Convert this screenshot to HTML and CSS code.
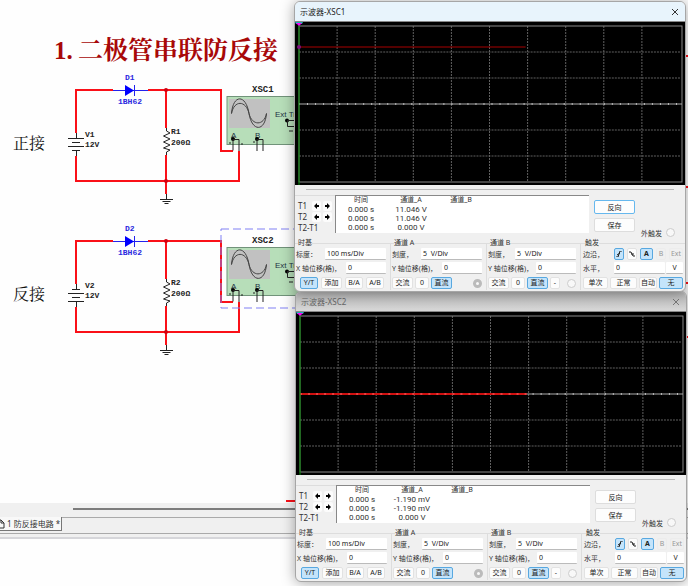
FILE: index.html
```
<!doctype html>
<html lang="zh-CN">

<head>
    <meta charset="utf-8">
    <title>防反接电路</title>
    <link rel="stylesheet" href="styles.css">
</head>
<body>
<main class="desktop">
    <div class="sheet">
        <svg class="schematic" width="688" height="503" viewBox="0 0 688 503">
            <defs>
                <!-- wires and parts shared by both circuits -->
                <g id="circuit">
                    <path class="wire" d="M113 90H76V133M76 156V181H239V151M148 90H221V151H233M166 90V128M166 155V194"/>
                    <circle class="node" cx="166" cy="90" r="2"/>
                    <circle class="node" cx="166" cy="181" r="2"/>
                    <path class="diode" d="M113 90.500H148M134.500 85V96"/>
                    <path class="diode-fill" d="M125 85L134 90.500L125 96Z"/>
                    <path class="part" d="M166.500 128V131L170 133L163.500 136L170 139L163.500 142L170 145L163.500 148L170 150L166.500 152V155"/>
                    <path class="part" d="M166.500 194V199M160 199.500H173M162.500 201.500H170.500M164.500 203.500H168.500"/>
                </g>
                <g id="scope">
                    <rect class="scope-box" x="227" y="96.500" width="72" height="48"/>
                    <rect class="scope-screen" x="229" y="99" width="41" height="29"/>
                    <path class="wave" d="M231.500 113.500C233 94 246 94 249 113.500C252 132 265 132 266.500 113.500"/>
                    <path class="wave" d="M231.500 113.500C234 100 246 100 249 113.500C252 126 264 126 266.500 113.500"/>
                    <text class="scope-text" x="275" y="117">Ext Trig</text>
                    <text class="scope-text" x="231" y="138">A</text>
                    <text class="scope-text" x="255" y="138">B</text>
                    <circle cx="233" cy="139" r="2"/>
                    <circle cx="257" cy="139" r="2"/>
                    <circle cx="287" cy="120.500" r="2"/>
                    <path class="part" d="M233 139V150.500M233 139.500H239V151M257 139V151M257 139.500H263V151M287 120.500H294M287.500 121V126.500H294M289 131H293M229 143H231M241 144H243M253 142H255"/>
                </g>
            </defs>

            <text class="heading" x="54" y="59">1.</text>
            <text class="heading" x="78" y="59">二极管串联防反接</text>

            <use href="#circuit"/>
            <use href="#scope"/>
            <path class="part" d="M76.500 133V138M68 138.500H84M72 142.500H80M68 146.500H84M72 150.500H80M76.500 151V156"/>
            <text class="side" x="13" y="149">正接</text>
            <text class="label blue" x="125" y="80">D1</text>
            <text class="label blue" x="118" y="104">1BH62</text>
            <text class="label" x="85" y="137">V1</text>
            <text class="label" x="85" y="147">12V</text>
            <text class="label" x="171" y="134">R1</text>
            <text class="label" x="171" y="145">200Ω</text>
            <text class="label name" x="252" y="92">XSC1</text>

            <g transform="translate(0 151)">
                <use href="#circuit"/>
                <use href="#scope"/>
                <path class="part" d="M76.500 133V138M72 138.500H80M68 142.500H84M72 146.500H80M68 150.500H84M76.500 151V156"/>
                <text class="side" x="13" y="149">反接</text>
                <text class="label blue" x="125" y="80">D2</text>
                <text class="label blue" x="118" y="104">1BH62</text>
                <text class="label" x="85" y="137">V2</text>
                <text class="label" x="85" y="147">12V</text>
                <text class="label" x="171" y="134">R2</text>
                <text class="label" x="171" y="145">200Ω</text>
                <text class="label name" x="252" y="92">XSC2</text>
                <rect class="selected" x="221" y="78" width="90" height="79"/>
            </g>
            <!-- ends of wires that run under the windows -->
            <path class="wire" d="M286 501H300M680 187H688M680 283H688M686 56H688M686 337H688"/>
        </svg>
    </div>
    <div class="tabbar">
        <div class="scrollbar"></div>
        <div class="tabs">
            <a class="tab" href="#"><svg width="5" height="11" viewBox="0 0 5 11"><path d="M0 2H1V5H4V10H0M1 2L4 5"/></svg>1 防反接电路 *</a>
        </div>
    </div>
    <div class="output"></div>
</main>

<div id="windows"></div>

<script>
    const scopes = [
        {id: 'XSC1', cls: 'active', y: 25, value: '11.046 V'},
        {id: 'XSC2', cls: 'inactive', y: 82, value: '-1.190 mV'}
    ];

    function graph(s){
        let lines='';
        for(let i=1;i<10;i++) lines+=`M${4+i*38} 4V160`;
        for(let i=1;i<6;i++) if(i!=3) lines+=`M4 ${4+i*26}H385`;
        return `<svg class="graph" viewBox="0 0 389 163" preserveAspectRatio="none">
            <path class="grid" d="${lines}"/>
            <rect class="frame" x="4" y="4" width="382" height="156"/>
            <path class="axis" d="M4 82H386"/>
            <path class="ticks" d="M4 82H386"/>
            <path class="trace" d="M4 ${s.y}H230"/>
            ${s.y==82 ? '<path class="trace-ticks" d="M4 82H230"/>' : ''}
            <path class="cursor" d="M4 1V163"/>
            <path class="cursor-top" d="M0 0H8L7 2H1Z"/>
            <path class="cursor-mark" d="M1 1H7L4 4Z"/>
            ${s.y==82 ? '' : '<circle class="cursor-dot" cx="4" cy="25" r="2"/>'}
        </svg>`;
    }

    // black arrow of the cursor buttons, dir is left or right
    function arrow(dir){
        let d = dir=='left' ? 'M0 3L3 0V2H5V4H3V6Z' : 'M5 3L2 0V2H0V4H2V6Z';
        return `<button aria-label="${dir}"><svg width="5" height="6" viewBox="0 0 5 6"><path d="${d}"/></svg></button>`;
    }

    function channel(s, name){
        let k=s.id+name;
        return `<fieldset class="group">
            <legend>通道 ${name}</legend>
            <div class="row"><label for="scale${k}">刻度，</label><input type="text" class="wide" id="scale${k}" value="5  V/Div"></div>
            <div class="row"><label for="pos${k}">Y 轴位移(格)，</label><input type="text" class="short" id="pos${k}" value="0"></div>
            <div class="row keys">
                <button class="w21">交流</button><button class="w14">0</button><button class="w21 on">直流</button>${name=='B' ? '<button class="w9">-</button>' : ''}
                <input type="radio" class="dot ${name=='A' ? 'ring' : ''}" aria-label="通道 ${name}">
            </div>
        </fieldset>`;
    }

    let html='';
    for(let i=0;i<scopes.length;i++){
        let s=scopes[i];
        html+=`
        <section class="window ${s.cls}">
            <header class="titlebar">
                <span>示波器-${s.id}</span>
                <button class="close" aria-label="关闭"><svg width="8" height="8" viewBox="0 0 8 8"><path d="M1 1L7 7M7 1L1 7"/></svg></button>
            </header>
            ${graph(s)}
            <div class="panel">
                <hr>
                <div class="readout">
                    <div class="cursors">
                        <div class="cursor-row"><span>T1</span>${arrow('left')}${arrow('right')}</div>
                        <div class="cursor-row"><span>T2</span>${arrow('left')}${arrow('right')}</div>
                        <div class="cursor-row"><span>T2-T1</span></div>
                    </div>
                    <div class="values">
                        <table>
                            <tr><th>时间</th><th>通道_A</th><th>通道_B</th></tr>
                            <tr><td>0.000 s</td><td>${s.value}</td><td></td></tr>
                            <tr><td>0.000 s</td><td>${s.value}</td><td></td></tr>
                            <tr><td>0.000 s</td><td>0.000 V</td><td></td></tr>
                        </table>
                    </div>
                    <div class="actions">
                        <button class="reverse">反向</button>
                        <button>保存</button>
                    </div>
                    <label class="ext">外触发<input type="radio" class="dot"></label>
                </div>
                <div class="groups">
                    <fieldset class="group">
                        <legend>时基</legend>
                        <div class="row"><label for="time${s.id}">标度：</label><input type="text" class="wide" id="time${s.id}" value="100 ms/Div"></div>
                        <div class="row"><label for="x${s.id}">X 轴位移(格)，</label><input type="text" class="short" id="x${s.id}" value="0"></div>
                        <div class="row keys timebase"><button class="w18 on">Y/T</button><button class="w21">添加</button><button class="w18">B/A</button><button class="w18">A/B</button></div>
                    </fieldset>
                    ${channel(s,'A')}
                    ${channel(s,'B')}
                    <fieldset class="group trigger">
                        <legend>触发</legend>
                        <div class="row edge"><span class="edge-label">边沿，</span>
                            <button class="on" aria-label="上升沿"><svg width="6" height="6" viewBox="0 0 6 6"><path d="M0 6H2L4 0H6M1 4L4 2"/></svg></button>
                            <button aria-label="下降沿"><svg width="6" height="6" viewBox="0 0 6 6"><path d="M0 1H2L4 5H6M2 3H5"/></svg></button>
                            <button class="on a">A</button><button class="off">B</button><button class="off extkey">Ext</button>
                        </div>
                        <div class="row level"><label for="level${s.id}">水平，</label><input type="text" id="level${s.id}" value="0"><input type="text" class="unit" aria-label="单位" value="V"></div>
                        <div class="row keys"><button class="w25">单次</button><button class="w28">正常</button><button class="w18">自动</button><button class="w24 on">无</button></div>
                    </fieldset>
                </div>
            </div>
        </section>`;
    }
    document.getElementById('windows').innerHTML=html;
</script>
</body>

</html>
```
FILE: styles.css
```
* {
    box-sizing: border-box;
}
body {
    margin: 0;
    background-color: #fefefe;
    font-family: "Noto Sans", "Noto Sans CJK SC", sans-serif;
    font-size: 8px;
    color: #333;
    overflow: hidden;
}
button, input {
    font-family: inherit;
    font-size: 7px;
    color: #222;
    margin: 0;
    padding: 0;
}

/* schematic sheet */
.desktop {
    display: flex;
    flex-direction: column;
    height: 100vh;
}
.sheet {
    flex: 1;
    min-height: 0;
    overflow: hidden;
}
.schematic {
    display: block;
}
.wire {
    fill: none;
    stroke: #fa1018;
    stroke-width: 2;
}
.node {
    fill: #d00010;
}
.part {
    fill: none;
    stroke: #222;
    stroke-width: 1;
}
.diode {
    stroke: #2222ee;
    stroke-width: 1;
}
.diode-fill {
    fill: #0000ff;
}
.scope-box {
    fill: #b7deb9;
    stroke: #71937a;
}
.scope-screen {
    fill: #c1c1c1;
}
.wave {
    fill: none;
    stroke: #444;
}
.scope-text {
    font-family: "Liberation Sans", sans-serif;
    font-size: 8px;
    fill: #234;
}
.heading {
    font-family: "Liberation Serif", "Noto Serif CJK SC", "Noto Sans CJK SC", serif;
    font-size: 25px;
    font-weight: bold;
    fill: #a80808;
}
.side {
    font-family: "Liberation Serif", "Noto Serif CJK SC", "Noto Sans CJK SC", serif;
    font-size: 16px;
    fill: #111;
}
.label {
    font-family: "Liberation Mono", monospace;
    font-size: 8px;
    font-weight: bold;
    fill: #222;
}
.label.blue {
    fill: #2a2ae0;
}
.label.name {
    font-size: 9px;
}
.selected {
    fill: none;
    stroke: #8080f4;
    stroke-dasharray: 8 4;
}

/* tabs under the sheet */
.tabbar {
    height: 36px;
    padding-top: 5px;
    background-color: #f0f0f0;
    border-bottom: 2px solid #d6d6da;
}
.scrollbar {
    height: 2px;
    margin-left: 73px;
    background-color: #7c7c7c;
}
.tabs {
    display: flex;
    height: 17px;
    margin-top: 7px;
    border-top: 1px solid #aaa;
    border-bottom: 1px solid #aaa;
}
.tab {
    display: flex;
    align-items: center;
    gap: 2px;
    height: 14px;
    width: 62px;
    margin-top: -1px;
    background-color: #f8f8f8;
    border-right: 1px solid #777;
    border-bottom: 1px solid #777;
    color: #333;
    text-decoration: none;
    white-space: nowrap;
}
.tab path {
    fill: none;
    stroke: #333;
}
.output {
    height: 47px;
}

/* oscilloscope windows */
.window {
    position: absolute;
    left: 294px;
    right: 2px;
    top: 1px;
    background-color: #f0f0f0;
    border: 1px solid #a6a6a6;
    border-radius: 6px;
    box-shadow: 0 1px 14px rgba(0, 0, 0, 0.35);
    overflow: hidden;
}
.window.active {
    z-index: 2;
}
.window.inactive {
    left: 295px;
    right: 1px;
    top: 291px;
}
.titlebar {
    display: flex;
    justify-content: space-between;
    align-items: center;
    height: 20px;
    padding: 0 5px;
    background-color: #e8f4fc;
    border-bottom: 1px solid #888;
    color: #222;
}
.inactive .titlebar {
    background: linear-gradient(#b4b4b4, #d8d8d8);
    color: #666;
}
.close {
    width: 10px;
    height: 10px;
    border: none;
    background: none;
    display: flex;
    align-items: center;
    justify-content: center;
}
.close path {
    stroke: #333;
}
.inactive .close path {
    stroke: #777;
}
.graph {
    display: block;
    width: 100%;
    height: 163px;
    background-color: #000;
}
.graph path, .graph rect {
    fill: none;
}
.graph .grid {
    stroke: #606060;
    stroke-dasharray: 2 1;
}
.graph .frame {
    stroke: #8a8a8a;
}
.graph .axis {
    stroke: #aaa;
}
.graph .ticks {
    stroke: #bbb;
    stroke-width: 2;
    stroke-dasharray: 1 7;
}
.graph .trace {
    stroke: #a80000;
}
.inactive .graph .trace {
    stroke: #d01010;
    stroke-width: 2;
}
.graph .trace-ticks {
    stroke: #ff7070;
    stroke-dasharray: 2 6;
}
.graph .cursor {
    stroke: #008a00;
}
.graph .cursor-top {
    fill: #20b0b0;
}
.graph .cursor-mark {
    fill: #ff00ff;
}
.cursor-dot {
    fill: #801080;
}

/* readout */
.panel {
    height: 106px;
    padding-top: 4px;
}
.panel hr {
    height: 1px;
    margin: 0 11px 5px;
    border: none;
    background-color: #bbb;
}
.readout {
    display: flex;
    height: 38px;
}
.cursors {
    width: 40px;
    padding: 4px 0 0 3px;
    border-top: 1px solid #ddd;
}
.cursor-row {
    display: flex;
    align-items: center;
    gap: 2px;
    height: 11px;
}
.cursor-row span {
    width: 12px;
    white-space: nowrap;
}
.cursor-row button {
    display: flex;
    align-items: center;
    justify-content: center;
    width: 9px;
    height: 10px;
    border: none;
    border-radius: 2px;
    background-color: #fcfcfc;
}
.values {
    flex: 1;
    background-color: #fff;
    border-top: 1px solid #888;
    border-left: 1px solid #888;
}
.values table {
    width: 150px;
    table-layout: fixed;
    border-collapse: collapse;
}
.values th, .values td {
    padding: 0;
    height: 9px;
    line-height: 9px;
    font-family: Roboto, "Noto Sans CJK SC", sans-serif;
    font-weight: normal;
    text-align: center;
}
.values th {
    font-size: 7px;
}
.actions {
    display: flex;
    flex-direction: column;
    gap: 4px;
    width: 46px;
    padding: 5px 0 0 5px;
}
.actions button {
    height: 14px;
    background-color: #fdfdfd;
    border: 1px solid #ddd;
    border-radius: 2px;
}
.active .actions .reverse {
    border-color: #66b8ee;
}
.ext {
    display: flex;
    align-items: center;
    justify-content: flex-end;
    gap: 4px;
    width: 50px;
    height: 9px;
    padding-right: 10px;
    margin-top: 33px;
    font-size: 7px;
}
.dot {
    appearance: none;
    width: 9px;
    height: 9px;
    background-color: #f8f8f8;
    border: 1px solid #ccc;
    border-radius: 50%;
}
.dot.ring {
    border: 3px solid #bbb;
}

/* settings */
.groups {
    display: grid;
    grid-template-columns: 96fr 96fr 94fr 104fr;
    margin-top: 6px;
}
.group {
    min-width: 0;
    margin: 0;
    padding: 0 4px 0 1px;
    border: 0 solid #ddd;
    border-width: 1px 1px 0 0;
}
.group legend {
    margin-left: 2px;
    padding: 0;
    font-size: 7px;
    line-height: 8px;
}
.row {
    display: flex;
    align-items: center;
    justify-content: space-between;
    height: 14px;
    white-space: nowrap;
    font-size: 7px;
}
.row input[type=text] {
    height: 12px;
    padding: 0 2px;
    background-color: #fff;
    border: none;
    border-bottom: 1px solid #bbb;
    border-radius: 1px;
}
.row .wide {
    width: 61px;
}
.row .short {
    width: 40px;
}
.row button {
    height: 12px;
    background-color: #fcfcfc;
    border: 1px solid #e2e2e2;
    border-radius: 2px;
    line-height: 10px;
    text-align: center;
}
.row button.on {
    background-color: #c4e4fb;
    border-color: #58a8e0;
}
.row.keys {
    justify-content: flex-start;
    gap: 2px;
    margin-top: 1px;
}
.row.timebase {
    padding-left: 4px;
    gap: 3px;
}
.keys .dot {
    margin-left: auto;
}
.w9 {
    width: 10px;
}
.w14 {
    width: 14px;
}
.w18 {
    width: 18px;
}
.w21 {
    width: 21px;
}
.w24 {
    width: 24px;
}
.w25 {
    width: 25px;
}
.w28 {
    width: 27px;
}
.trigger {
    padding: 0 2px;
    border-right: none;
}
.row.edge {
    justify-content: flex-start;
    gap: 3px;
}
.edge button {
    display: flex;
    align-items: center;
    justify-content: center;
    width: 10px;
}
.edge-label {
    width: 28px;
}
.edge path {
    fill: none;
    stroke: #222;
}
.row .a {
    width: 13px;
    font-weight: bold;
}
.row .off {
    color: #999;
    background: none;
    border-color: #ececec;
}
.row .extkey {
    width: 14px;
}
.row.level {
    gap: 1px;
}
.level label {
    width: 30px;
}
.level input {
    flex: 1;
    min-width: 0;
}
.level .unit {
    flex: none;
    width: 17px;
    text-align: center;
}
```
